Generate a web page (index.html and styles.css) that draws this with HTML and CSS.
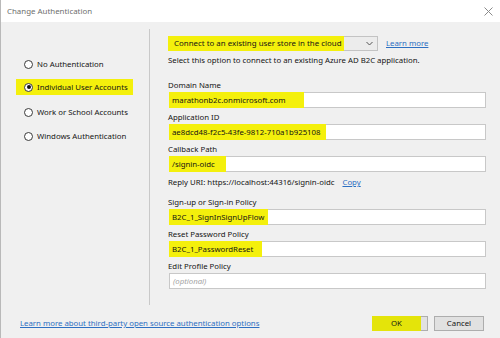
FILE: index.html
```html
<!DOCTYPE html>
<html>
<head>
<meta charset="utf-8">
<link rel="stylesheet" href="styles.css">
</head>
<body>
<div class="window">
  <div class="titlebar">
    <span class="title">Change Authentication</span>
    <svg class="close" width="9" height="9" viewBox="0 0 9 9"><path d="M0.5 0.5 L8.5 8.5 M8.5 0.5 L0.5 8.5" stroke="#8a8a8a" stroke-width="1"/></svg>
  </div>
  <div class="main">
    <div class="left">
      <div class="radio-row"><span class="radio-item"><span class="radio"></span><span>No Authentication</span></span></div>
      <div class="radio-row"><span class="radio-item hl-radio"><span class="radio checked"></span><span>Individual User Accounts</span></span></div>
      <div class="radio-row"><span class="radio-item"><span class="radio"></span><span>Work or School Accounts</span></span></div>
      <div class="radio-row"><span class="radio-item"><span class="radio"></span><span>Windows Authentication</span></span></div>
    </div>
    <div class="divider"></div>
    <div class="right">
      <div class="select-row">
        <div class="select">
          <span class="select-value">Connect to an existing user store in the cloud</span>
          <svg class="chev" width="7" height="5" viewBox="0 0 7 5"><path d="M0.5 1 L3.5 4 L6.5 1" stroke="#555" stroke-width="1" fill="none"/></svg>
        </div>
        <a class="link">Learn more</a>
      </div>
      <div class="desc">Select this option to connect to an existing Azure AD B2C application.</div>

      <div class="group first">
        <div class="label">Domain Name</div>
        <div class="input"><span class="hl hl-domain">marathonb2c.onmicrosoft.com</span></div>
      </div>
      <div class="group">
        <div class="label">Application ID</div>
        <div class="input"><span class="hl hl-app">ae8dcd48-f2c5-43fe-9812-710a1b925108</span></div>
      </div>
      <div class="group">
        <div class="label">Callback Path</div>
        <div class="input"><span class="hl hl-cb">/signin-oidc</span></div>
      </div>
      <div class="reply">Reply URI: https://localhost:44316/signin-oidc <a class="link copy">Copy</a></div>

      <div class="group policies">
        <div class="label">Sign-up or Sign-in Policy</div>
        <div class="input"><span class="hl hl-sign">B2C_1_SignInSignUpFlow</span></div>
      </div>
      <div class="group">
        <div class="label">Reset Password Policy</div>
        <div class="input"><span class="hl hl-reset">B2C_1_PasswordReset</span></div>
      </div>
      <div class="group">
        <div class="label">Edit Profile Policy</div>
        <div class="input"><span class="placeholder">(optional)</span></div>
      </div>
    </div>
  </div>
  <div class="footer">
    <a class="link footer-link">Learn more about third-party open source authentication options</a>
    <div class="buttons">
      <div class="btn ok"><span class="ok-hl">OK</span></div>
      <div class="btn">Cancel</div>
    </div>
  </div>
</div>
</body>
</html>
```

FILE: styles.css
```css
* { box-sizing: border-box; }
html, body { margin: 0; padding: 0; }
body {
  width: 500px;
  height: 338px;
  overflow: hidden;
  font-family: "Noto Sans", "Open Sans", sans-serif;
  font-size: 7.8px;
  line-height: 11px;
  color: #141414;
}
.window {
  width: 500px;
  height: 338px;
  background: #f0f0f0;
  display: flex;
  flex-direction: column;
  border-left: 1px solid #b9b9b9;
}
.titlebar {
  height: 22px;
  background: #ffffff;
  display: flex;
  align-items: center;
  justify-content: space-between;
  padding: 0 7px 0 6px;
  flex: none;
}
.title { color: #6e6e6e; font-size: 7.9px; }
.close { display: block; }
.main {
  margin-top: 7px;
  height: 276px;
  display: flex;
  flex: none;
}
.left {
  width: 147px;
  padding-top: 23px;
  flex: none;
}
.radio-row {
  height: 24px;
  display: flex;
  align-items: center;
  padding-left: 15px;
}
.radio-item {
  display: inline-flex;
  align-items: center;
  gap: 4px;
  padding: 2px 5px 2px 8px;
  white-space: nowrap;
}
.hl-radio {
  background: #f4f00c;
  padding-top: 3px;
  padding-bottom: 2px;
  margin-top: -3px;
}
.radio {
  width: 9px;
  height: 9px;
  border: 1px solid #3a3a3a;
  border-radius: 50%;
  background: #fff;
  display: inline-flex;
  align-items: center;
  justify-content: center;
  flex: none;
}
.radio.checked::after {
  content: "";
  width: 4px;
  height: 4px;
  border-radius: 50%;
  background: #111;
}
.divider {
  width: 1px;
  background: #c9c9c9;
  flex: none;
  margin-left: 1px;
}
.right {
  flex: 1;
  padding-left: 18px;
  padding-right: 14px;
  padding-top: 7px;
  display: flex;
  flex-direction: column;
}
.select-row {
  display: flex;
  align-items: center;
  height: 15px;
}
.select {
  width: 210px;
  height: 15px;
  border: 1px solid #c3c3c3;
  background: #ececec;
  display: flex;
  align-items: stretch;
  justify-content: space-between;
}
.select-value {
  background: #f4f00c;
  width: 176px;
  margin: -1px 0 -1px -1px;
  padding-left: 6px;
  display: flex;
  align-items: center;
  font-size: 7.9px;
  white-space: nowrap;
}
.chev { align-self: center; margin-right: 4px; }
.link {
  color: #2d6fc2;
  text-decoration: underline;
}
.select-row .link { margin-left: 8px; }
.desc { margin-top: 4px; height: 11px; white-space: nowrap; }
.group {
  margin-top: 4px;
}
.group.first { margin-top: 14px; }
.group.policies { margin-top: 9px; }
.label { height: 11px; }
.input {
  margin-top: 1px;
  height: 16px;
  margin-left: 1px;
  background: #fff;
  border: 1px solid #c8c8c8;
  display: flex;
  align-items: stretch;
}
.hl {
  background: #f4f00c;
  padding-left: 3px;
  display: flex;
  align-items: center;
  margin: -1px 0 -1px -1px;
  white-space: nowrap;
}
.hl-domain { width: 135px; }
.hl-app { width: 157px; }
.hl-cb { width: 57px; }
.hl-sign { width: 99px; }
.hl-reset { width: 93px; }
.placeholder {
  color: #a5a5a5;
  font-style: italic;
  padding-left: 3px;
  display: flex;
  align-items: center;
}
.reply { margin-top: 5px; height: 11px; white-space: nowrap; }
.copy { margin-left: 6px; }
.footer {
  flex: 1;
  display: flex;
  align-items: center;
  justify-content: space-between;
  padding: 4px 16px 0 19px;
}
.buttons { display: flex; gap: 6px; }
.btn {
  width: 50px;
  height: 15px;
  border: 1px solid #adadad;
  background: #e1e1e1;
  display: flex;
  align-items: center;
  justify-content: center;
}
.btn.ok {
  width: 56px;
  justify-content: flex-start;
  padding: 0;
}
.ok-hl {
  background: #e4e40a;
  width: 49px;
  height: 15px;
  margin: -1px 0 -1px -1px;
  display: flex;
  align-items: center;
  justify-content: center;
}
```
